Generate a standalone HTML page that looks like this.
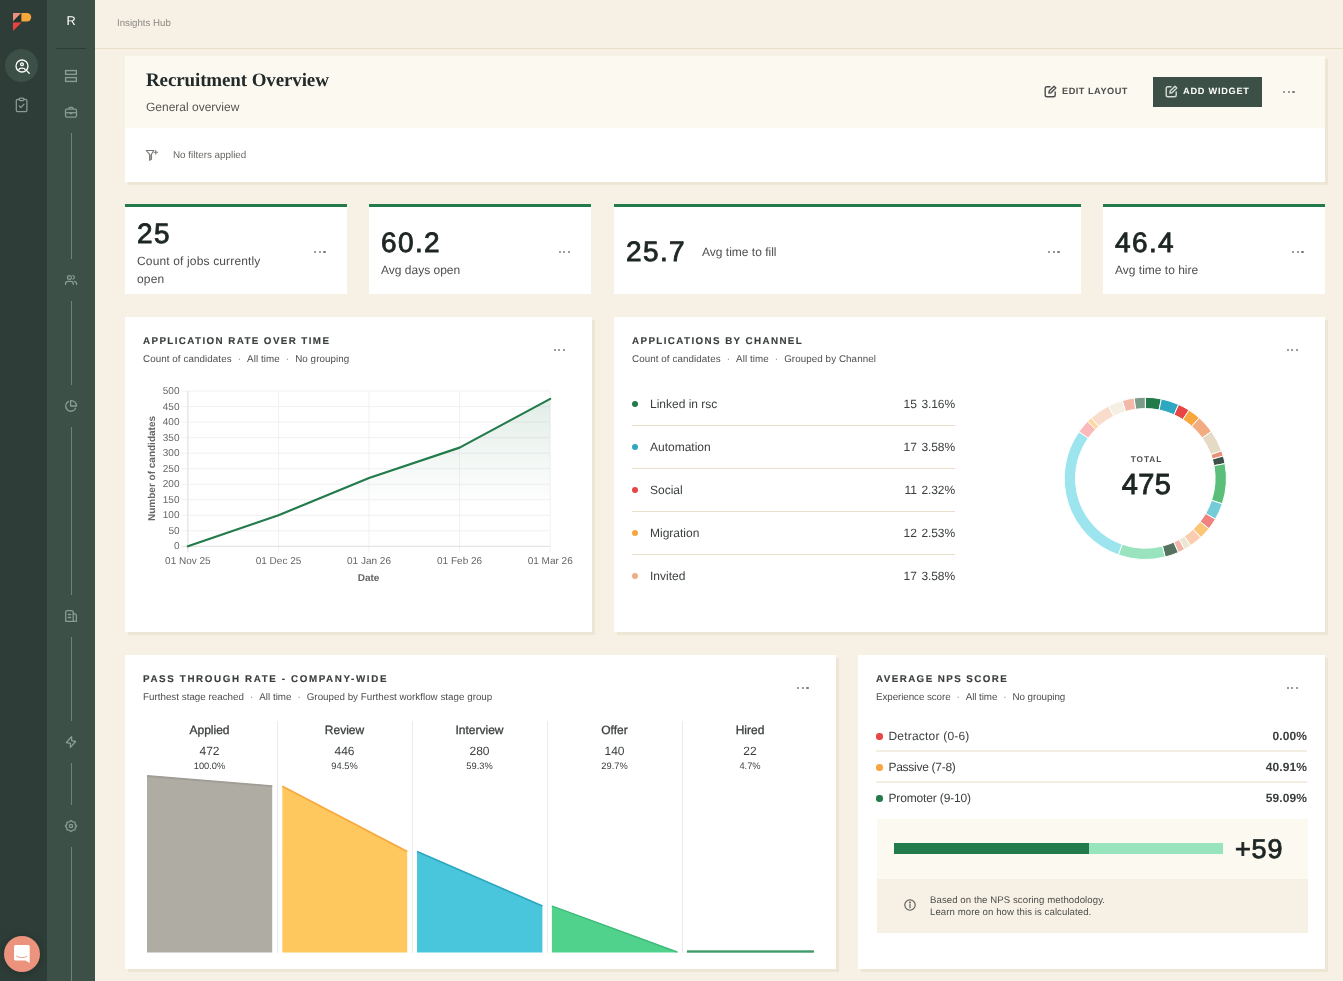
<!DOCTYPE html>
<html>
<head>
<meta charset="utf-8">
<title>Recruitment Overview</title>
<style>
*{box-sizing:border-box;margin:0;padding:0}
html,body{width:1343px;height:981px;overflow:hidden}
body{text-rendering:geometricPrecision;font-family:"Liberation Sans",sans-serif;background:#f7f0e4;color:#3a3f3d;position:relative}
.abs{position:absolute}
.t{position:absolute;white-space:nowrap;line-height:1}
#sb1{left:0;top:0;width:47px;height:981px;background:#2e3d37}
#sb2{left:47px;top:0;width:48px;height:981px;background:#3c5047}
.vl{position:absolute;left:71px;width:1px;background:#6d8278}
#topline{left:95px;top:48px;width:1248px;height:1px;background:#e9dfc9}
.card{position:absolute;background:#fff;box-shadow:3px 3px 0 #eee6d4}
.kpi{position:absolute;background:#fff;border-top:3px solid #237a4b;top:204.3px;height:90px}
.dots{position:absolute;width:12px;height:2.4px}
.dots i{position:absolute;top:0;width:2.4px;height:2.4px;border-radius:1.2px;background:#7b7b78}
.dots i:nth-child(1){left:0}.dots i:nth-child(2){left:4.6px}.dots i:nth-child(3){left:9.2px}
.num{font-size:28px;color:#1d2624;-webkit-text-stroke:0.85px #1d2624;letter-spacing:1.4px}
.lbl{font-size:12px;color:#4d4f4c}
.wt{font-size:9.8px;font-weight:bold;letter-spacing:1.4px;color:#3a3f3d;-webkit-text-stroke:0.15px #3a3f3d}
.ws{font-size:9.8px;letter-spacing:0.08px;color:#4d4f4c}
.hr{position:absolute;height:1px;background:#e9dec9}
.sep{margin:0 6px;color:#777}
.leg{font-size:12px;color:#3a3f3d}
.fh{font-size:12px;text-align:center;color:#3a3f3d;-webkit-text-stroke:0.3px #3a3f3d}
.fn{font-size:12px;text-align:center;color:#3a3f3d}
.fp{font-size:9.3px;text-align:center;color:#3a3f3d}
.nl{font-size:12px;color:#3a3f3d}
.nv{font-size:12px;font-weight:bold;letter-spacing:0.1px;color:#3a3f3d}
.dot{position:absolute;width:6px;height:6px;border-radius:3px}
</style>
</head>
<body>
<div id="wrap" style="position:absolute;left:0;top:0;width:1343px;height:981px;will-change:transform">
<!-- SIDEBARS -->
<div id="sb1" class="abs"></div>
<div id="sb2" class="abs"></div>
<div id="topline" class="abs"></div>

<!-- logo -->
<svg class="abs" style="left:13px;top:13px" width="19" height="18" viewBox="0 0 19 18">
  <polygon points="0,0 8.4,0 0,8.4" fill="#ea917c"/>
  <polygon points="8.4,0 8.4,8.4 0,8.4" fill="#27332e"/>
  <path d="M8.4 0 H14 A4.2 4.2 0 0 1 14 8.4 H8.4 Z" fill="#f6a63a"/>
  <polygon points="0,9.4 8.5,9.4 0,17.9" fill="#e9423f"/>
</svg>
<!-- active circle -->
<div class="abs" style="left:5px;top:49px;width:33px;height:33px;border-radius:50%;background:#3c5047"></div>
<svg class="abs" style="left:14.5px;top:58.5px" width="16" height="16" viewBox="0 0 16 16" fill="none" stroke="#fff" stroke-width="1.3" stroke-linecap="round">
  <circle cx="7" cy="7" r="6"/>
  <circle cx="7" cy="5.2" r="1.4"/>
  <path d="M3.9 10.6 C4.3 8.6 9.7 8.6 10.1 10.6"/>
  <path d="M11.4 11.4 L14.2 14.2"/>
</svg>
<svg class="abs" style="left:15px;top:96px" width="14" height="17" viewBox="0 0 14 17" fill="none" stroke="#8a9c93" stroke-width="1.25" stroke-linecap="round" stroke-linejoin="round">
  <path d="M4.2 3.4 H2.6 Q1.3 3.4 1.3 4.7 V14.2 Q1.3 15.5 2.6 15.5 H10.6 Q11.9 15.5 11.9 14.2 V4.7 Q11.9 3.4 10.6 3.4 H9"/>
  <rect x="4.2" y="2.2" width="4.8" height="2.4" rx="1.1"/>
  <path d="M4.3 10 L5.9 11.6 L9 8.2"/>
</svg>
<!-- intercom -->
<div class="abs" style="left:4px;top:936px;width:36px;height:36px;border-radius:50%;background:#eb937d;box-shadow:0 1px 8px rgba(0,0,0,.25)"></div>
<svg class="abs" style="left:13px;top:944px" width="18.8" height="20" viewBox="0 0 18 20" preserveAspectRatio="none">
  <path d="M2.5 1 H14.5 Q16 1 16 2.5 V19 L12 16.5 H2.5 Q1 16.5 1 15 V2.5 Q1 1 2.5 1 Z" fill="#fff"/>
  <path d="M3.6 12.3 Q8.5 15.2 13.4 12.3" stroke="#eb937d" stroke-width="0.9" fill="none" stroke-linecap="round"/>
</svg>

<!-- sidebar 2 -->
<div class="t" style="left:66.6px;top:15px;font-size:12.8px;color:#fff">R</div>
<div class="abs" style="left:56px;top:48px;width:30px;height:1px;background:#2e3d37"></div>
<svg class="abs" style="left:64px;top:69px" width="14" height="14" viewBox="0 0 14 14" fill="none" stroke="#8a9c93" stroke-width="1.4">
  <rect x="1.6" y="1.6" width="10.75" height="3.75"/>
  <rect x="1.6" y="8.6" width="10.75" height="3.8"/>
</svg>
<svg class="abs" style="left:64px;top:105px" width="14" height="14" viewBox="0 0 14 14" fill="none" stroke="#8a9c93" stroke-width="1.3" stroke-linejoin="round">
  <rect x="1.5" y="4.1" width="11" height="8.1" rx="1.6"/>
  <path d="M5 4 V3.2 Q5 2.3 5.9 2.3 H8.1 Q9 2.3 9 3.2 V4"/>
  <path d="M1.5 7.7 H12.5"/>
  <path d="M6.1 7.7 V8.5 H7.9 V7.7"/>
</svg>
<div class="vl" style="top:133px;height:126px"></div>
<svg class="abs" style="left:64px;top:273px" width="14" height="14" viewBox="0 0 14 14" fill="none" stroke="#8a9c93" stroke-width="1.25" stroke-linecap="round">
  <circle cx="5.4" cy="4.4" r="1.9"/>
  <path d="M1.5 11.4 V11 Q1.5 8.3 4.2 8.3 H6.6 Q9.3 8.3 9.3 11 V11.4"/>
  <path d="M8.9 2.5 A1.9 1.9 0 0 1 8.9 6.2"/>
  <path d="M10.4 8.4 Q12.6 8.8 12.6 11 V11.4"/>
</svg>
<div class="vl" style="top:301px;height:84px"></div>
<svg class="abs" style="left:64px;top:399px" width="14" height="14" viewBox="0 0 14 14" fill="none" stroke="#8a9c93" stroke-width="1.3" stroke-linejoin="round" stroke-linecap="round">
  <path d="M4.6 2.4 A5.2 5.2 0 1 0 11.6 9.3"/>
  <path d="M6.6 1.6 A5.4 5.4 0 0 1 12.5 7 H6.6 Z"/>
</svg>
<div class="vl" style="top:427px;height:168px"></div>
<svg class="abs" style="left:64px;top:609px" width="14" height="14" viewBox="0 0 14 14" fill="none" stroke="#8a9c93" stroke-width="1.3" stroke-linejoin="round" stroke-linecap="round">
  <path d="M1.7 12.3 V3.3 Q1.7 1.7 3.3 1.7 H7.6 Q9.2 1.7 9.2 3.3 V12.3 Z"/>
  <path d="M9.2 4.2 L11.7 5.4 Q12.4 5.8 12.4 6.6 V12.3 H9.2"/>
  <path d="M4.3 5.5 H6.7 M4.3 8.5 H6.7"/>
</svg>
<div class="vl" style="top:637px;height:84px"></div>
<svg class="abs" style="left:64px;top:735px" width="14" height="14" viewBox="0 0 14 14" fill="none" stroke="#8a9c93" stroke-width="1.3" stroke-linejoin="round">
  <path d="M7.6 1.6 L2.4 7.5 L6.4 8.3 L6.4 12.4 L11.6 6.5 L7.6 5.7 Z"/>
</svg>
<div class="vl" style="top:763px;height:42px"></div>
<svg class="abs" style="left:64px;top:819px" width="14" height="14" viewBox="0 0 14 14" fill="none" stroke="#8a9c93" stroke-width="1.3" stroke-linejoin="round">
  <circle cx="7" cy="7" r="1.6"/>
  <polygon points="7.00,1.40 8.72,2.84 10.96,3.04 11.16,5.28 12.60,7.00 11.16,8.72 10.96,10.96 8.72,11.16 7.00,12.60 5.28,11.16 3.04,10.96 2.84,8.72 1.40,7.00 2.84,5.28 3.04,3.04 5.28,2.84"/>
</svg>
<div class="vl" style="top:847px;height:134px"></div>

<!-- TOP BAR -->
<div class="t" style="left:117px;top:19.3px;font-size:9.7px;color:#8a8a84">Insights Hub</div>

<!-- HEADER CARD -->
<div class="card" style="left:125px;top:56px;width:1200px;height:126px"></div>
<div class="abs" style="left:125px;top:56px;width:1200px;height:72px;background:#fcf9f1"></div>
<div class="t" id="title" style="left:146px;top:70.5px;font-family:'Liberation Serif',serif;font-weight:bold;font-size:19px;color:#222b29;letter-spacing:-0.12px">Recruitment Overview</div>
<div class="t" id="sub" style="left:146px;top:100.5px;font-size:12px;color:#55574f">General overview</div>
<!-- edit layout -->
<svg class="abs" style="left:1043.6px;top:85.4px" width="13" height="13" viewBox="0 0 13 13" fill="none" stroke="#4d4f4c" stroke-width="1.4" stroke-linejoin="round" stroke-linecap="round">
  <path d="M6 1.8 H3 Q1.2 1.8 1.2 3.6 V10 Q1.2 11.8 3 11.8 H9.4 Q11.2 11.8 11.2 10 V7"/>
  <path d="M10 1.2 L11.8 3 L7 7.8 L4.9 8.1 L5.2 6 Z"/>
</svg>
<div class="t" id="edit" style="left:1062px;top:86.8px;font-size:9.2px;font-weight:bold;letter-spacing:0.5px;color:#4d4f4c">EDIT LAYOUT</div>
<div class="abs" style="left:1153px;top:77px;width:109px;height:30px;background:#3c5047"></div>
<svg class="abs" style="left:1164.6px;top:85.4px" width="13" height="13" viewBox="0 0 13 13" fill="none" stroke="#d5ddd8" stroke-width="1.4" stroke-linejoin="round" stroke-linecap="round">
  <path d="M6 1.8 H3 Q1.2 1.8 1.2 3.6 V10 Q1.2 11.8 3 11.8 H9.4 Q11.2 11.8 11.2 10 V7"/>
  <path d="M10 1.2 L11.8 3 L7 7.8 L4.9 8.1 L5.2 6 Z"/>
</svg>
<div class="t" id="add" style="left:1183px;top:86.8px;font-size:9.2px;font-weight:bold;letter-spacing:0.75px;color:#fff">ADD WIDGET</div>
<div class="dots" style="left:1283px;top:91px"><i></i><i></i><i></i></div>
<!-- filter -->
<svg class="abs" style="left:145px;top:148px" width="15" height="14" viewBox="0 0 15 14" fill="none" stroke="#777873" stroke-width="1.1" stroke-linejoin="round" stroke-linecap="round">
  <path d="M1.3 2.5 H8.7 L6.5 6.3 V11.3 L4.6 12.3 V6.3 Z"/>
  <path d="M4.9 6.6 H6.2 V11 L4.9 11.7 Z" fill="#9a9b97" stroke="none"/>
  <path d="M10.8 2.5 V6 M9.05 4.25 H12.55"/>
</svg>
<div class="t" id="nof" style="left:173px;top:151.2px;font-size:9.85px;color:#676862">No filters applied</div>

<!-- KPI CARDS -->
<div class="kpi" style="left:125px;width:222px"></div>
<div class="t num" id="k1" style="left:137px;top:220px">25</div>
<div class="t lbl" id="k1l" style="left:137px;top:252.3px;line-height:18px;white-space:normal;width:140px;letter-spacing:0.15px">Count of jobs currently open</div>
<div class="dots" style="left:314px;top:250.5px"><i></i><i></i><i></i></div>

<div class="kpi" style="left:369px;width:222px"></div>
<div class="t num" id="k2" style="left:381px;top:229px">60.2</div>
<div class="t lbl" id="k2l" style="left:381px;top:264px">Avg days open</div>
<div class="dots" style="left:558.5px;top:250.5px"><i></i><i></i><i></i></div>

<div class="kpi" style="left:614px;width:467px"></div>
<div class="t num" id="k3" style="left:626px;top:238px">25.7</div>
<div class="t lbl" id="k3l" style="left:702px;top:246px">Avg time to fill</div>
<div class="dots" style="left:1048px;top:250.5px"><i></i><i></i><i></i></div>

<div class="kpi" style="left:1103px;width:222px"></div>
<div class="t num" id="k4" style="left:1115px;top:229px">46.4</div>
<div class="t lbl" id="k4l" style="left:1115px;top:264px">Avg time to hire</div>
<div class="dots" style="left:1292px;top:250.5px"><i></i><i></i><i></i></div>

<!-- ROW2 -->
<div class="card" style="left:125px;top:317px;width:467px;height:315px"></div>
<div class="card" style="left:614px;top:317px;width:711px;height:315px"></div>
<!-- ROW3 -->
<div class="card" style="left:125px;top:655px;width:711px;height:314px"></div>
<div class="card" style="left:858px;top:655px;width:467px;height:314px"></div>

<!--ROW2A-->
<div class="t wt" id="t2a" style="left:143px;top:337px">APPLICATION RATE OVER TIME</div>
<div class="t ws" id="s2a" style="left:143px;top:354.6px">Count of candidates<span class="sep">·</span>All time<span class="sep">·</span>No grouping</div>
<div class="dots" style="left:553.5px;top:349px"><i></i><i></i><i></i></div>
<svg class="abs" style="left:125px;top:317px" width="467" height="315" viewBox="125 317 467 315" font-family="Liberation Sans, sans-serif">
<defs><linearGradient id="lg" x1="0" y1="391" x2="0" y2="546" gradientUnits="userSpaceOnUse"><stop offset="0" stop-color="#237a4b" stop-opacity="0.14"/><stop offset="0.75" stop-color="#237a4b" stop-opacity="0"/></linearGradient></defs>
<path d="M181.5 546.3H550.2 M181.5 530.8H550.2 M181.5 515.3H550.2 M181.5 499.7H550.2 M181.5 484.2H550.2 M181.5 468.7H550.2 M181.5 453.2H550.2 M181.5 437.7H550.2 M181.5 422.1H550.2 M181.5 406.6H550.2 M181.5 391.1H550.2 M187.9 391.1V552.3 M278.5 391.1V552.3 M369.0 391.1V552.3 M459.6 391.1V552.3 M550.2 391.1V552.3" stroke="#f1f1f1" stroke-width="1" fill="none"/>
<path d="M181.5 546.3H550.2 M187.9 391.1V552.3" stroke="#e2e2e2" stroke-width="1" fill="none"/>
<polygon points="187.9,546.3 278.5,515.3 369.0,478.0 459.6,447.6 550.2,398.9 550.2,546.3 187.9,546.3" fill="url(#lg)"/>
<polyline points="187.9,546.3 278.5,515.3 369.0,478.0 459.6,447.6 550.2,398.9" fill="none" stroke="#237a4b" stroke-width="2.2" stroke-linejoin="round" stroke-linecap="round"/>
<text x="179.5" y="549.4" font-size="10" fill="#666" text-anchor="end">0</text>
<text x="179.5" y="533.9" font-size="10" fill="#666" text-anchor="end">50</text>
<text x="179.5" y="518.4" font-size="10" fill="#666" text-anchor="end">100</text>
<text x="179.5" y="502.8" font-size="10" fill="#666" text-anchor="end">150</text>
<text x="179.5" y="487.3" font-size="10" fill="#666" text-anchor="end">200</text>
<text x="179.5" y="471.8" font-size="10" fill="#666" text-anchor="end">250</text>
<text x="179.5" y="456.3" font-size="10" fill="#666" text-anchor="end">300</text>
<text x="179.5" y="440.8" font-size="10" fill="#666" text-anchor="end">350</text>
<text x="179.5" y="425.2" font-size="10" fill="#666" text-anchor="end">400</text>
<text x="179.5" y="409.7" font-size="10" fill="#666" text-anchor="end">450</text>
<text x="179.5" y="394.2" font-size="10" fill="#666" text-anchor="end">500</text>
<text x="187.9" y="563.9" font-size="10" fill="#666" text-anchor="middle">01 Nov 25</text>
<text x="278.5" y="563.9" font-size="10" fill="#666" text-anchor="middle">01 Dec 25</text>
<text x="369.0" y="563.9" font-size="10" fill="#666" text-anchor="middle">01 Jan 26</text>
<text x="459.6" y="563.9" font-size="10" fill="#666" text-anchor="middle">01 Feb 26</text>
<text x="550.2" y="563.9" font-size="10" fill="#666" text-anchor="middle">01 Mar 26</text>
<text x="368.5" y="581" font-size="10" font-weight="bold" fill="#666" text-anchor="middle">Date</text>
<text transform="translate(155.3 468.5) rotate(-90)" font-size="10" font-weight="bold" fill="#666" text-anchor="middle">Number of candidates</text>
</svg>
<!--/ROW2A-->
<!--ROW2B-->
<div class="t wt" id="t2b" style="left:632px;top:337px">APPLICATIONS BY CHANNEL</div>
<div class="t ws" id="s2b" style="left:632px;top:354.6px">Count of candidates<span class="sep">·</span>All time<span class="sep">·</span>Grouped by Channel</div>
<div class="dots" style="left:1286.5px;top:349px"><i></i><i></i><i></i></div>
<div class="dot" style="left:631.5px;top:401.3px;background:#237a4b"></div>
<div class="t leg" style="left:650px;top:398px">Linked in rsc</div>
<div class="t leg" style="right:388px;top:398px">15<span style="margin-left:4.6px;letter-spacing:-0.1px">3.16%</span></div>
<div class="dot" style="left:631.5px;top:444.3px;background:#2ea8c0"></div>
<div class="t leg" style="left:650px;top:441px">Automation</div>
<div class="t leg" style="right:388px;top:441px">17<span style="margin-left:4.6px;letter-spacing:-0.1px">3.58%</span></div>
<div class="dot" style="left:631.5px;top:487.3px;background:#e84545"></div>
<div class="t leg" style="left:650px;top:484px">Social</div>
<div class="t leg" style="right:388px;top:484px">11<span style="margin-left:4.6px;letter-spacing:-0.1px">2.32%</span></div>
<div class="dot" style="left:631.5px;top:530.3px;background:#f9a63f"></div>
<div class="t leg" style="left:650px;top:527px">Migration</div>
<div class="t leg" style="right:388px;top:527px">12<span style="margin-left:4.6px;letter-spacing:-0.1px">2.53%</span></div>
<div class="dot" style="left:631.5px;top:573.3px;background:#f3ab82"></div>
<div class="t leg" style="left:650px;top:570px">Invited</div>
<div class="t leg" style="right:388px;top:570px">17<span style="margin-left:4.6px;letter-spacing:-0.1px">3.58%</span></div>
<div class="hr" style="left:632px;top:425px;width:323px"></div>
<div class="hr" style="left:632px;top:468px;width:323px"></div>
<div class="hr" style="left:632px;top:511px;width:323px"></div>
<div class="hr" style="left:632px;top:554px;width:323px"></div>
<svg class="abs" style="left:1055px;top:388px" width="181" height="181" viewBox="1055 388 181 181">
<path d="M1145.30 397.30A81.1 81.1 0 0 1 1161.33 398.90L1159.10 409.98A69.8 69.8 0 0 0 1145.30 408.60Z" fill="#237a4b" stroke="#fff" stroke-width="1"/>
<path d="M1161.33 398.90A81.1 81.1 0 0 1 1178.67 404.49L1174.02 414.78A69.8 69.8 0 0 0 1159.10 409.98Z" fill="#2ea8c0" stroke="#fff" stroke-width="1"/>
<path d="M1178.67 404.49A81.1 81.1 0 0 1 1188.99 410.08L1182.91 419.60A69.8 69.8 0 0 0 1174.02 414.78Z" fill="#e84545" stroke="#fff" stroke-width="1"/>
<path d="M1188.99 410.08A81.1 81.1 0 0 1 1199.25 417.85L1191.73 426.28A69.8 69.8 0 0 0 1182.91 419.60Z" fill="#f9a63f" stroke="#fff" stroke-width="1"/>
<path d="M1199.25 417.85A81.1 81.1 0 0 1 1211.41 431.42L1202.20 437.97A69.8 69.8 0 0 0 1191.73 426.28Z" fill="#f3ab82" stroke="#fff" stroke-width="1"/>
<path d="M1211.41 431.42A81.1 81.1 0 0 1 1221.56 450.80L1210.93 454.64A69.8 69.8 0 0 0 1202.20 437.97Z" fill="#e5dac4" stroke="#fff" stroke-width="1"/>
<path d="M1221.56 450.80A81.1 81.1 0 0 1 1223.26 456.05L1212.40 459.16A69.8 69.8 0 0 0 1210.93 454.64Z" fill="#e8917b" stroke="#fff" stroke-width="1"/>
<path d="M1223.26 456.05A81.1 81.1 0 0 1 1225.04 463.62L1213.93 465.68A69.8 69.8 0 0 0 1212.40 459.16Z" fill="#3c5047" stroke="#fff" stroke-width="1"/>
<path d="M1225.04 463.62A81.1 81.1 0 0 1 1222.30 503.86L1211.57 500.32A69.8 69.8 0 0 0 1213.93 465.68Z" fill="#5bbf7b" stroke="#fff" stroke-width="1"/>
<path d="M1222.30 503.86A81.1 81.1 0 0 1 1215.39 519.19L1205.63 513.51A69.8 69.8 0 0 0 1211.57 500.32Z" fill="#74ccd8" stroke="#fff" stroke-width="1"/>
<path d="M1215.39 519.19A81.1 81.1 0 0 1 1208.95 528.66L1200.08 521.66A69.8 69.8 0 0 0 1205.63 513.51Z" fill="#f08282" stroke="#fff" stroke-width="1"/>
<path d="M1208.95 528.66A81.1 81.1 0 0 1 1200.82 537.52L1193.08 529.28A69.8 69.8 0 0 0 1200.08 521.66Z" fill="#fcc679" stroke="#fff" stroke-width="1"/>
<path d="M1200.82 537.52A81.1 81.1 0 0 1 1190.65 545.63L1184.33 536.27A69.8 69.8 0 0 0 1193.08 529.28Z" fill="#fbcdb0" stroke="#fff" stroke-width="1"/>
<path d="M1190.65 545.63A81.1 81.1 0 0 1 1184.62 549.33L1179.14 539.45A69.8 69.8 0 0 0 1184.33 536.27Z" fill="#ece6d4" stroke="#fff" stroke-width="1"/>
<path d="M1184.62 549.33A81.1 81.1 0 0 1 1178.29 552.49L1173.69 542.17A69.8 69.8 0 0 0 1179.14 539.45Z" fill="#f1b8a9" stroke="#fff" stroke-width="1"/>
<path d="M1178.29 552.49A81.1 81.1 0 0 1 1165.19 557.02L1162.42 546.07A69.8 69.8 0 0 0 1173.69 542.17Z" fill="#54725f" stroke="#fff" stroke-width="1"/>
<path d="M1165.19 557.02A81.1 81.1 0 0 1 1118.36 554.90L1122.12 544.24A69.8 69.8 0 0 0 1162.42 546.07Z" fill="#99e4bf" stroke="#fff" stroke-width="1"/>
<path d="M1118.36 554.90A81.1 81.1 0 0 1 1079.03 431.65L1088.26 438.17A69.8 69.8 0 0 0 1122.12 544.24Z" fill="#9ce5ef" stroke="#fff" stroke-width="1"/>
<path d="M1079.03 431.65A81.1 81.1 0 0 1 1087.55 421.46L1095.60 429.39A69.8 69.8 0 0 0 1088.26 438.17Z" fill="#fcb9b9" stroke="#fff" stroke-width="1"/>
<path d="M1087.55 421.46A81.1 81.1 0 0 1 1091.24 417.94L1098.78 426.37A69.8 69.8 0 0 0 1095.60 429.39Z" fill="#fdd9a0" stroke="#fff" stroke-width="1"/>
<path d="M1091.24 417.94A81.1 81.1 0 0 1 1108.61 406.08L1113.72 416.15A69.8 69.8 0 0 0 1098.78 426.37Z" fill="#f9dccb" stroke="#fff" stroke-width="1"/>
<path d="M1108.61 406.08A81.1 81.1 0 0 1 1122.40 400.60L1125.59 411.44A69.8 69.8 0 0 0 1113.72 416.15Z" fill="#f5efe3" stroke="#fff" stroke-width="1"/>
<path d="M1122.40 400.60A81.1 81.1 0 0 1 1134.15 398.07L1135.71 409.26A69.8 69.8 0 0 0 1125.59 411.44Z" fill="#f2b9a9" stroke="#fff" stroke-width="1"/>
<path d="M1134.15 398.07A81.1 81.1 0 0 1 1145.30 397.30L1145.30 408.60A69.8 69.8 0 0 0 1135.71 409.26Z" fill="#7a9a8a" stroke="#fff" stroke-width="1"/>
</svg>
<div class="t" id="tot" style="left:1096.5px;width:100px;text-align:center;top:455.3px;font-size:8.3px;font-weight:bold;letter-spacing:0.9px;color:#4d4f4c">TOTAL</div>
<div class="t num" id="totn" style="left:1096.5px;width:100px;text-align:center;top:470.5px;font-size:29px;letter-spacing:0.3px">475</div>
<!--/ROW2B-->
<!--ROW3A-->
<div class="t wt" id="t3a" style="left:143px;top:675px;letter-spacing:1.62px">PASS THROUGH RATE - COMPANY-WIDE</div>
<div class="t ws" id="s3a" style="left:143px;top:692.6px;letter-spacing:0.01px">Furthest stage reached<span class="sep">·</span>All time<span class="sep">·</span>Grouped by Furthest workflow stage group</div>
<div class="dots" style="left:797px;top:686.5px"><i></i><i></i><i></i></div>
<div class="t fh" style="left:159.5px;width:100px;top:723.5px">Applied</div>
<div class="t fn" style="left:159.5px;width:100px;top:744.5px">472</div>
<div class="t fp" style="left:159.5px;width:100px;top:761.5px">100.0%</div>
<div class="t fh" style="left:294.5px;width:100px;top:723.5px">Review</div>
<div class="t fn" style="left:294.5px;width:100px;top:744.5px">446</div>
<div class="t fp" style="left:294.5px;width:100px;top:761.5px">94.5%</div>
<div class="t fh" style="left:429.5px;width:100px;top:723.5px">Interview</div>
<div class="t fn" style="left:429.5px;width:100px;top:744.5px">280</div>
<div class="t fp" style="left:429.5px;width:100px;top:761.5px">59.3%</div>
<div class="t fh" style="left:564.5px;width:100px;top:723.5px">Offer</div>
<div class="t fn" style="left:564.5px;width:100px;top:744.5px">140</div>
<div class="t fp" style="left:564.5px;width:100px;top:761.5px">29.7%</div>
<div class="t fh" style="left:700px;width:100px;top:723.5px">Hired</div>
<div class="t fn" style="left:700px;width:100px;top:744.5px">22</div>
<div class="t fp" style="left:700px;width:100px;top:761.5px">4.7%</div>
<div class="abs" style="left:277px;top:721px;width:1px;height:232px;background:#ebebeb"></div>
<div class="abs" style="left:412px;top:721px;width:1px;height:232px;background:#ebebeb"></div>
<div class="abs" style="left:547px;top:721px;width:1px;height:232px;background:#ebebeb"></div>
<div class="abs" style="left:682px;top:721px;width:1px;height:232px;background:#ebebeb"></div>
<svg class="abs" style="left:125px;top:760px" width="711" height="200" viewBox="125 760 711 200">
<polygon points="147,775.5 272.2,785.7 272.2,952.6 147,952.6" fill="#afaca4"/>
<path d="M147 776.0L272.2 786.2" stroke="#a09d95" stroke-width="1.8" fill="none"/>
<polygon points="282.3,785.7 407.2,851 407.2,952.6 282.3,952.6" fill="#fec85f"/>
<path d="M282.3 786.2L407.2 851.5" stroke="#f7a940" stroke-width="1.8" fill="none"/>
<polygon points="417,851 542.4,905.5 542.4,952.6 417,952.6" fill="#4ac6dc"/>
<path d="M417 851.5L542.4 906.0" stroke="#2ea8c0" stroke-width="1.8" fill="none"/>
<polygon points="551.9,905.5 677.4,951.6 677.4,952.6 551.9,952.6" fill="#50d28c"/>
<path d="M551.9 906.0L677.4 952.1" stroke="#3fb877" stroke-width="1.3" fill="none"/>
<rect x="686.9" y="950.3" width="127" height="2.4" fill="#3f9b67"/>
</svg>
<!--/ROW3A-->
<!--ROW3B-->
<div class="t wt" id="t3b" style="left:876px;top:675px;letter-spacing:1.41px">AVERAGE NPS SCORE</div>
<div class="t ws" id="s3b" style="left:876px;top:692.6px;letter-spacing:-0.07px">Experience score<span class="sep">·</span>All time<span class="sep">·</span>No grouping</div>
<div class="dots" style="left:1286.5px;top:686.5px"><i></i><i></i><i></i></div>
<div class="dot" style="left:876.2px;top:733.3px;width:6.4px;height:6.4px;border-radius:50%;background:#e84545"></div>
<div class="t nl" style="left:888.5px;top:730px;letter-spacing:0.2px">Detractor (0-6)</div>
<div class="t nv" style="right:36px;top:729.7px">0.00%</div>
<div class="dot" style="left:876.2px;top:764.3px;width:6.4px;height:6.4px;border-radius:50%;background:#f9a63f"></div>
<div class="t nl" style="left:888.5px;top:761px;letter-spacing:-0.28px">Passive (7-8)</div>
<div class="t nv" style="right:36px;top:760.7px">40.91%</div>
<div class="dot" style="left:876.2px;top:795.3px;width:6.4px;height:6.4px;border-radius:50%;background:#237a4b"></div>
<div class="t nl" style="left:888.5px;top:792px;letter-spacing:-0.15px">Promoter (9-10)</div>
<div class="t nv" style="right:36px;top:791.7px">59.09%</div>
<div class="hr" style="left:876px;top:750px;width:431px;height:2px;background:#f4eee2"></div>
<div class="hr" style="left:876px;top:781px;width:431px;height:2px;background:#f4eee2"></div>
<div class="abs" style="left:876.5px;top:819px;width:431px;height:59.5px;background:#fcf9f1"></div>
<div class="abs" style="left:876.5px;top:878.5px;width:431px;height:54px;background:#f7f0e4"></div>
<div class="abs" style="left:894.4px;top:842.6px;width:328.2px;height:11.8px;background:#98e4bd"></div>
<div class="abs" style="left:894.4px;top:842.6px;width:194.6px;height:11.8px;background:#237a4b"></div>
<div class="t num" id="nps" style="left:1235px;top:836px;font-size:27px;letter-spacing:0.8px">+59</div>
<svg class="abs" style="left:902.5px;top:898.3px" width="14" height="14" viewBox="0 0 14 14" fill="none" stroke="#5c5e59" stroke-width="1.15"><circle cx="7" cy="7" r="5.2"/><path d="M7 6.4 V9.8" stroke-linecap="round"/><circle cx="7" cy="4.5" r="0.4" fill="#5c5e59"/></svg>
<div class="t ws" id="inf" style="left:930px;top:894.5px;line-height:12.2px;font-size:9.6px">Based on the NPS scoring methodology.<br>Learn more on how this is calculated.</div>
<!--/ROW3B-->
</div>
</body>
</html>
